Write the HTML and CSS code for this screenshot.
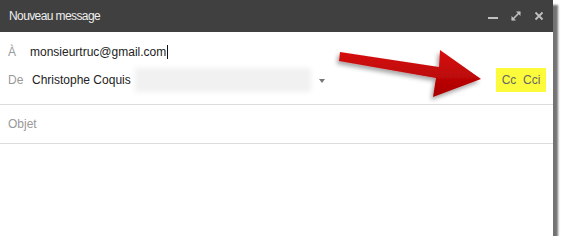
FILE: index.html
```html
<!DOCTYPE html>
<html lang="fr">
<head>
<meta charset="utf-8">
<title>Nouveau message</title>
<link rel="stylesheet" href="styles.css">
</head>
<body>
<div class="compose">
  <div class="header">
    <span class="title">Nouveau message</span>
    <div class="controls">
      <svg class="ic" width="12" height="12" viewBox="0 0 12 12"><rect x="1" y="7" width="10" height="2" fill="#c0c0c0"/></svg>
      <svg class="ic" width="12" height="12" viewBox="0 0 12 12"><path d="M2 10 L10 2" stroke="#c0c0c0" stroke-width="1.6"/><path d="M6 1.5 H10.5 V6 Z" fill="#c0c0c0"/><path d="M1.5 6 V10.5 H6 Z" fill="#c0c0c0"/></svg>
      <svg class="ic" width="12" height="12" viewBox="0 0 12 12"><path d="M2.5 2.5 L9.5 9.5 M9.5 2.5 L2.5 9.5" stroke="#c0c0c0" stroke-width="1.8"/></svg>
    </div>
  </div>
  <div class="fields">
    <div class="row">
      <span class="label">À</span>
      <span class="value to">monsieurtruc@gmail.com</span><span class="caret"></span>
    </div>
    <div class="row">
      <span class="label">De</span>
      <span class="value from">Christophe Coquis</span>
      <span class="blurred"></span>
      <span class="dropdown"></span>
      <span class="cc">Cc&nbsp;&nbsp;Cci</span>
    </div>
  </div>
  <div class="subject">Objet</div>
  <svg class="arrow" width="170" height="70" viewBox="330 42 170 70">
    <defs>
      <linearGradient id="red" x1="0" y1="0" x2="0" y2="1">
        <stop offset="0" stop-color="#d81010"/>
        <stop offset="1" stop-color="#a80000"/>
      </linearGradient>
      <filter id="sh" x="-20%" y="-30%" width="140%" height="160%">
        <feDropShadow dx="-2" dy="3" stdDeviation="2" flood-color="#000" flood-opacity="0.35"/>
      </filter>
    </defs>
    <path d="M340 52 L439 67 L440 50 L481 79 L433 97 L436 78 L339 61 Z" fill="url(#red)" filter="url(#sh)"/>
  </svg>
</div>
</body>
</html>
```
FILE: styles.css
```css
html, body {
  margin: 0;
  padding: 0;
  background: #ffffff;
}
body {
  font-family: Arial, "Liberation Sans", sans-serif;
  font-size: 12px;
  color: #222;
}
.compose {
  position: relative;
  width: 553px;
  height: 236px;
  background: #fff;
  box-shadow: 5px 5px 2px rgba(0, 0, 0, 0.55);
}
.header {
  height: 32px;
  background: #404040;
  display: flex;
  align-items: center;
  justify-content: space-between;
  padding: 0 8px 0 9px;
}
.title {
  color: #eeeeee;
  font-size: 12px;
  letter-spacing: -0.6px;
}
.controls {
  display: flex;
  align-items: center;
  gap: 11px;
}
.ic {
  display: block;
}
.fields {
  padding: 6px 0 10px;
  border-bottom: 1px solid #dcdcdc;
}
.row {
  height: 28px;
  display: flex;
  align-items: center;
  padding: 0 7px 0 8px;
}
.label {
  color: #999;
  width: 22px;
}
.to {
  color: #222;
}
.from {
  color: #222;
  margin-left: 2px;
}
.caret {
  width: 1px;
  height: 14px;
  background: #111;
  margin-left: 1px;
}
.blurred {
  width: 176px;
  height: 24px;
  margin-left: 4px;
  background: #f1f1f1;
  filter: blur(2.5px);
}
.dropdown {
  width: 0;
  height: 0;
  margin-left: 8px;
  border-left: 3px solid transparent;
  border-right: 3px solid transparent;
  border-top: 4px solid #777;
  margin-top: 2px;
}
.cc {
  margin-left: auto;
  background: #fbfb3c;
  color: #666;
  height: 24px;
  width: 50px;
  display: flex;
  align-items: center;
  justify-content: center;
}
.subject {
  height: 38px;
  display: flex;
  align-items: center;
  padding-left: 8px;
  color: #999;
  border-bottom: 1px solid #dcdcdc;
}
.arrow {
  position: absolute;
  left: 330px;
  top: 42px;
}
```
